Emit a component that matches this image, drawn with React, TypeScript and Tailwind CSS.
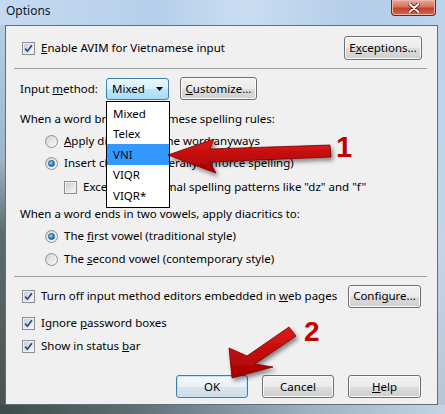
import React from "react";

type BoxProps = { checked?: boolean };

const Check = ({ checked }: BoxProps) => (
  <span className="flex h-[13px] w-[13px] shrink-0 items-center justify-center border border-[#8e8f8f] bg-white">
    <span className="flex h-[11px] w-[11px] items-center justify-center border border-[#f0f0f0] bg-[linear-gradient(135deg,#c9ccd1,#f7f7f7)]">
      {checked && (
        <svg width="9" height="9" viewBox="0 0 9 9">
          <path d="M1.2 4.6 L3.4 7.2 L7.9 1.2" fill="none" stroke="#2d4493" strokeWidth="1.7" />
        </svg>
      )}
    </span>
  </span>
);

const Radio = ({ checked }: BoxProps) => (
  <span className="flex h-[13px] w-[13px] shrink-0 items-center justify-center rounded-full border border-[#8e8f8f] bg-[linear-gradient(135deg,#cfd1d3,#fbfbfb)]">
    {checked && (
      <span className="h-[7px] w-[7px] rounded-full border border-[#1c5a8c] bg-[radial-gradient(circle_at_35%_35%,#9edcff,#2a86c8_55%,#0c4f86)]" />
    )}
  </span>
);

const Button = ({
  children,
  w,
  focused,
}: {
  children: React.ReactNode;
  w: string;
  focused?: boolean;
}) => (
  <div
    className={
      focused
        ? `${w} flex h-[23px] items-center justify-center rounded-[3px] border border-[#3c7fb1] bg-[linear-gradient(to_bottom,#f4f9fc_0%,#eaf1f6_50%,#dbe5ec_50%,#cfdbe4_100%)] shadow-[inset_0_0_0_1px_#bfe3f7]`
        : `${w} flex h-[23px] items-center justify-center rounded-[3px] border border-[#707070] bg-[linear-gradient(to_bottom,#f2f2f2_0%,#ebebeb_50%,#dddddd_50%,#cfcfcf_100%)] shadow-[inset_0_0_0_1px_#fbfbfb]`
    }
  >
    {children}
  </div>
);

const App = () => {
  return (
    <div className="relative flex h-[414px] w-[445px] flex-col overflow-hidden font-['Noto_Sans',sans-serif] text-[11.5px] leading-none text-black">
      {/* title bar */}
      <div className="flex h-[25px] shrink-0 items-start justify-between bg-[linear-gradient(to_right,#c5daf1,#b6cfea_35%,#c9ddf2_55%,#b4cde8_80%,#bcd3ec)]">
        <span className="pl-[6px] pt-[5px] text-[12px] text-[#0b1a2b]">Options</span>
        <div className="mr-[9px] flex h-[16px] w-[45px] items-center justify-center rounded-b-[4px] border border-t-0 border-[#6b2418] bg-[linear-gradient(to_bottom,#e9a899_0%,#d7735f_45%,#c4412a_55%,#d8654a_100%)] shadow-[inset_0_0_0_1px_#f0b6a8]">
          <svg width="12" height="10" viewBox="0 0 12 10">
            <path d="M1.5 1 L10.5 9 M10.5 1 L1.5 9" stroke="#5a1208" strokeWidth="3.6" strokeLinecap="round" />
            <path d="M1.5 1 L10.5 9 M10.5 1 L1.5 9" stroke="#ffffff" strokeWidth="2" strokeLinecap="round" />
          </svg>
        </div>
      </div>

      <div className="flex flex-1">
        <div className="w-[5px] bg-[linear-gradient(to_bottom,#b5cde6,#9fb4c7_35%,#5c6b70_55%,#48554f)]" />

        {/* client area */}
        <div className="relative flex h-[380px] w-[433px] flex-col border border-[#5f6f7b] bg-[#f0f0f0]">
          {/* enable row */}
          <div className="mt-[10px] flex h-[24px] items-center justify-between pl-[16px] pr-[15px]">
            <div className="flex items-center gap-[6px]">
              <Check checked />
              <span>
                <u>E</u>nable AVIM for Vietnamese input
              </span>
            </div>
            <Button w="w-[78px] h-[24px]">
              E<u>x</u>ceptions...
            </Button>
          </div>

          <div className="ml-[8px] mt-[8px] h-px w-[413px] bg-[#a0a0a0]" />

          {/* input method row */}
          <div className="mt-[8px] flex h-[23px] items-center pl-[14px]">
            <span className="w-[86px]">
              Input <u>m</u>ethod:
            </span>
            <div className="flex h-[22px] w-[63px] items-center justify-between rounded-[3px] border border-[#3c7fb1] bg-[linear-gradient(to_bottom,#eaf6fd_0%,#d9f0fc_50%,#bee6fd_50%,#a7d9f5_100%)] pl-[5px] pr-[5px]">
              <span>Mixed</span>
              <svg width="7" height="4" viewBox="0 0 7 4">
                <path d="M0 0 H7 L3.5 4 Z" fill="#000" />
              </svg>
            </div>
            <Button w="ml-[11px] w-[77px]">
              <u>C</u>ustomize...
            </Button>
          </div>

          <div className="mt-[8px] flex h-[22px] items-center pl-[14px]">
            When a word breaks Vietnamese spelling rules:
          </div>
          <div className="flex h-[22px] items-center gap-[6px] pl-[39px]">
            <Radio />
            <span>
              <u>A</u>pply diacritics to the word anyways
            </span>
          </div>
          <div className="flex h-[22px] items-center gap-[6px] pl-[39px]">
            <Radio checked />
            <span>Insert characters literally (enforce spelling)</span>
          </div>
          <div className="mt-[2px] flex h-[22px] items-center gap-[6px] pl-[58px]">
            <Check />
            <span>Except for informal spelling patterns like "dz" and "f"</span>
          </div>

          <div className="mt-[5px] flex h-[22px] items-center pl-[14px]">
            When a word ends in two vowels, apply diacritics to:
          </div>
          <div className="flex h-[22px] items-center gap-[6px] pl-[39px]">
            <Radio checked />
            <span>
              The <u>f</u>irst vowel (traditional style)
            </span>
          </div>
          <div className="mt-[1px] flex h-[22px] items-center gap-[6px] pl-[39px]">
            <Radio />
            <span>
              The <u>s</u>econd vowel (contemporary style)
            </span>
          </div>

          <div className="ml-[8px] mt-[6px] h-px w-[413px] bg-[#a0a0a0]" />

          <div className="mt-[8px] flex h-[22px] items-center justify-between pl-[16px] pr-[16px]">
            <div className="flex items-center gap-[6px]">
              <Check checked />
              <span>
                Turn off input method editors embedded in <u>w</u>eb pages
              </span>
            </div>
            <Button w="w-[73px]">
              Confi<u>g</u>ure...
            </Button>
          </div>
          <div className="mt-[5px] flex h-[22px] items-center gap-[6px] pl-[16px]">
            <Check checked />
            <span>
              Ignore <u>p</u>assword boxes
            </span>
          </div>
          <div className="mt-[1px] flex h-[22px] items-center gap-[6px] pl-[16px]">
            <Check checked />
            <span>
              Show in status <u>b</u>ar
            </span>
          </div>

          <div className="mt-[18px] flex justify-end gap-[14px] pr-[16px]">
            <Button w="w-[72px]" focused>
              OK
            </Button>
            <Button w="w-[72px]">Cancel</Button>
            <Button w="w-[73px]">
              <u>H</u>elp
            </Button>
          </div>

          {/* open dropdown list */}
          <div className="absolute left-[100px] top-[75px] flex h-[107px] w-[64px] flex-col border border-black bg-white py-px">
            <div className="flex h-[21px] items-center pl-[6px]">Mixed</div>
            <div className="flex h-[21px] items-center pl-[6px]">Telex</div>
            <div className="flex h-[21px] items-center bg-[#3399ff] pl-[6px] text-[#0a0a20]">VNI</div>
            <div className="flex h-[21px] items-center pl-[6px]">VIQR</div>
            <div className="flex h-[21px] items-center pl-[6px]">VIQR*</div>
          </div>
        </div>

        <div className="w-[7px] bg-[linear-gradient(to_bottom,#bcd3ec,#c3d5e6_60%,#b7c6d4)]" />
      </div>

      <div className="h-[9px] shrink-0 bg-[linear-gradient(to_right,#3f4b49,#5f6e72_30%,#9fb2c2_70%,#c4d4e3)]" />

      {/* callout arrows */}
      <svg className="pointer-events-none absolute left-0 top-0" width="445" height="414" viewBox="0 0 445 414">
        <defs>
          <linearGradient id="ar" x1="0" y1="0" x2="0" y2="1">
            <stop offset="0" stopColor="#e01a1a" />
            <stop offset="1" stopColor="#a30000" />
          </linearGradient>
          <filter id="sh" x="-20%" y="-20%" width="140%" height="160%">
            <feDropShadow dx="2" dy="3" stdDeviation="2" floodColor="#000" floodOpacity="0.45" />
          </filter>
        </defs>
        <g filter="url(#sh)" fill="url(#ar)" stroke="#7a0000" strokeWidth="0.8">
          <path d="M168 155 L214 139 L210 149 L330 145 L331 157 L210 162 L216 173 Z" />
          <path d="M232 378 L229 348 L247 356 L289 327 L296 336 L255 364 L273 367 Z" />
        </g>
        <text x="336" y="157" fill="#c00000" fontFamily="Liberation Sans, Arial, sans-serif" fontWeight="bold" fontSize="29">
          1
        </text>
        <text x="304" y="341" fill="#c00000" fontFamily="Liberation Sans, Arial, sans-serif" fontWeight="bold" fontSize="28">
          2
        </text>
      </svg>
    </div>
  );
};

export default App;
